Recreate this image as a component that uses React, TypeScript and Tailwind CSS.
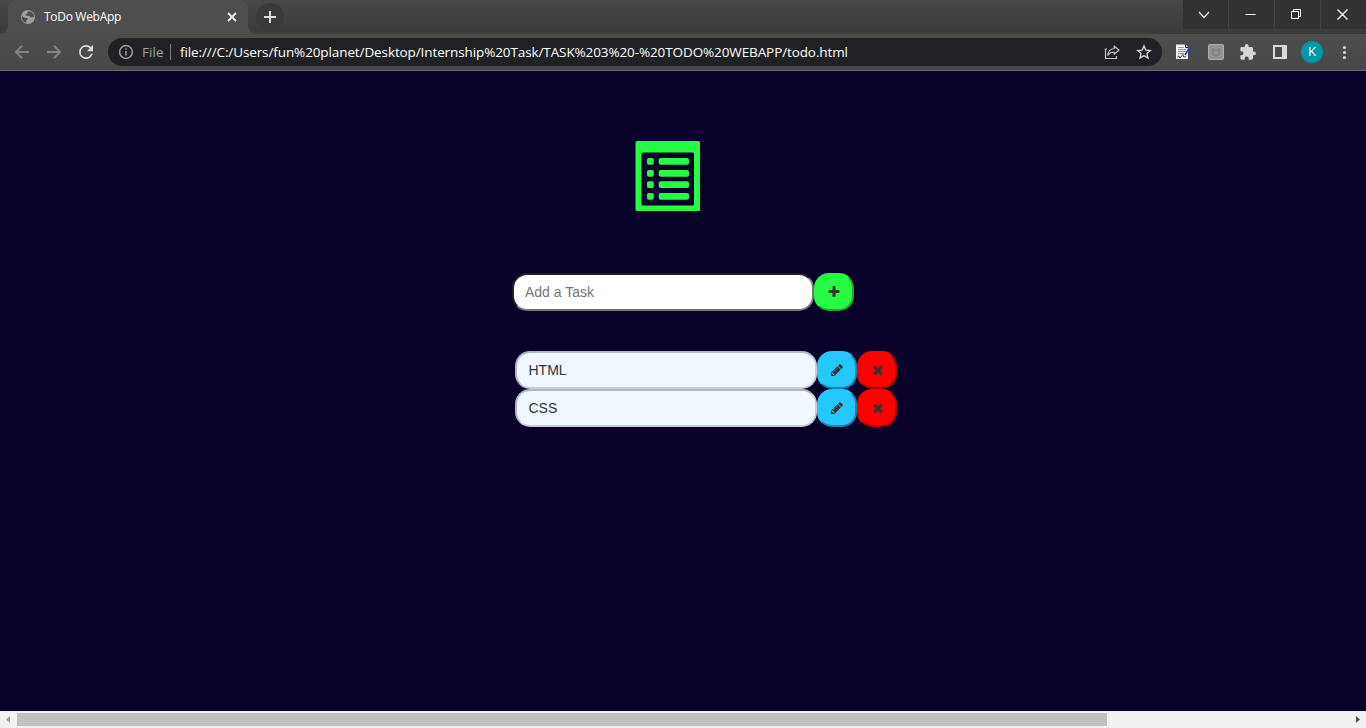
import React from 'react';

const PLUS =
  'M1600 736v192q0 40-28 68t-68 28h-416v416q0 40-28 68t-68 28h-192q-40 0-68-28t-28-68v-416h-416q-40 0-68-28t-28-68v-192q0-40 28-68t68-28h416v-416q0-40 28-68t68-28h192q40 0 68 28t28 68v416h416q40 0 68 28t28 68z';
const TIMES =
  'M1490 1322q0 40-28 68l-136 136q-28 28-68 28t-68-28l-294-294-294 294q-28 28-68 28t-68-28l-136-136q-28-28-28-68t28-68l294-294-294-294q-28-28-28-68t28-68l136-136q28-28 68-28t68 28l294 294 294-294q28-28 68-28t68 28l136 136q28 28 28 68t-28 68l-294 294 294 294q28 28 28 68z';
const PENCIL =
  'M491 1536l91-91-235-235-91 91v107h128v128h107zm523-928q0-22-22-22-10 0-17 7l-542 542q-7 7-7 17 0 22 22 22 10 0 17-7l542-542q7-7 7-17zm-54-192l416 416-832 832h-416v-416zm683 96q0 53-37 90l-166 166-416-416 166-165q36-38 90-38 53 0 91 38l235 234q37 39 37 91z';

function Glyph({ d }: { d: string }) {
  return (
    <svg className="size-3.5" viewBox="0 0 1792 1792" fill="#333">
      <path d={d} />
    </svg>
  );
}

function TabStrip() {
  return (
    <div className="flex h-[34px] bg-linear-to-b from-[#484848] to-[#3a3a3a]">
      <div className="flex w-2 items-end bg-[#4d4d4d]">
        <div className="h-full w-2 rounded-br-lg bg-linear-to-b from-[#484848] to-[#3a3a3a]" />
      </div>
      <div className="flex h-[34px] w-60 items-center rounded-t-lg bg-[#4e4e4e] pl-3">
        <svg className="size-4" viewBox="0 0 16 16">
          <circle cx="8" cy="8" r="7" fill="#9aa0a6" />
          <path
            d="M9 2.2 7.5 3v1.6L5.8 5.4v1.4h3.4l1.2 1.5H13l1.2-.8A6 6 0 0 0 9 2.2ZM2 7.2l3.5 1.9h2v1.7l-1.3.8v2.1A6 6 0 0 1 2 7.2Z"
            fill="#4e4e4e"
          />
        </svg>
        <span className="ml-2 w-[180px] text-xs tracking-[-0.3px] whitespace-nowrap text-white">ToDo WebApp</span>
        <svg className="size-4" viewBox="0 0 16 16" fill="none" stroke="#f1f1f1" strokeWidth="1.8">
          <path d="m4 4 8 8m0-8-8 8" />
        </svg>
      </div>
      <div className="flex w-2 bg-[#4d4d4d]">
        <div className="h-full w-2 rounded-bl-lg bg-linear-to-b from-[#484848] to-[#3a3a3a]" />
      </div>
      <div className="mt-[3px] flex size-7 items-center justify-center rounded-full bg-[#3a3a3a]">
        <svg className="size-3.5" viewBox="0 0 14 14" stroke="#dedede" strokeWidth="2">
          <path d="M7 1v12M1 7h12" />
        </svg>
      </div>
      <div className="ml-auto flex h-[29px] gap-px bg-[#434343]">
        <div className="flex w-[45px] items-center justify-center bg-[#323232] pr-[3px]">
          <svg className="size-3" viewBox="0 0 12 12" fill="none" stroke="#eee" strokeWidth="1.2">
            <path d="m1 3 5 5.500 5-5.500" />
          </svg>
        </div>
        <div className="flex w-[45px] items-center justify-center bg-[#323232] pr-0.5">
          <svg className="h-[11px] w-[11px]" viewBox="0 0 11 11" stroke="#fff">
            <path d="M.5 5.5h10" />
          </svg>
        </div>
        <div className="flex w-[45px] items-center justify-center bg-[#323232] pr-0.5">
          <svg className="h-[11px] w-[11px]" viewBox="0 0 11 11" fill="none" stroke="#fff">
            <path d="M.5 2.5h7v7h-7ZM2.5 2.5v-2h7v7h-2" />
          </svg>
        </div>
        <div className="flex w-[45px] items-center justify-center bg-[#323232] pr-0.5">
          <svg className="h-[11px] w-[11px]" viewBox="0 0 11 11" stroke="#fff" strokeWidth="1.2">
            <path d="m.5.5 10 10m0-10-10 10" />
          </svg>
        </div>
      </div>
    </div>
  );
}

function Toolbar() {
  return (
    <div className="flex h-[37px] items-center border-b border-[#6b6b6b] bg-linear-to-b from-[#4d4d4d] to-[#484848] pl-3">
      <svg className="size-5" viewBox="0 0 20 20" fill="none" stroke="#858585" strokeWidth="1.8">
        <path d="M17 10H4m6-6.2L3.8 10l6.2 6.2" />
      </svg>
      <svg className="ml-3 size-5" viewBox="0 0 20 20" fill="none" stroke="#858585" strokeWidth="1.8">
        <path d="M3 10h13M10 3.8l6.2 6.2-6.2 6.2" />
      </svg>
      <svg className="ml-2.5 size-6" viewBox="0 0 24 24" fill="#e0e0e0">
        <g transform="translate(1.6 1.6) scale(.87)">
          <path d="M17.65 6.35A7.96 7.96 0 0 0 12 4a8 8 0 1 0 7.73 10h-2.08A6 6 0 1 1 12 6c1.66 0 3.14.69 4.22 1.78L13 11h7V4l-2.35 2.35z" />
        </g>
      </svg>
      <div className="ml-[10px] flex h-7 w-[1054px] items-center rounded-full bg-[#202124] pr-2.5 pl-2.5">
        <svg className="size-4" viewBox="0 0 16 16" fill="none" stroke="#9aa0a6" strokeWidth="1.5">
          <circle cx="8" cy="8" r="6.4" />
          <path d="M8 7v4.6M8 4.3v1.5" />
        </svg>
        <span className="ml-2 w-7 text-[13.5px] tracking-[0.1px] text-[#9aa0a6]">File</span>
        <span className="h-4 w-px bg-[#77797d]" />
        <span className="ml-[9px] text-[13.5px] tracking-[-0.106px] whitespace-nowrap text-white">
          file:///C:/Users/fun%20planet/Desktop/Internship%20Task/TASK%203%20-%20TODO%20WEBAPP/todo.html
        </span>
        <svg className="ml-auto size-4" viewBox="0 0 16 16" fill="none" stroke="#c4c5c7" strokeWidth="1.2">
          <path d="M3 5H1.500v9.500h11V12" />
          <path d="M10.200 2 15 6.200l-4.800 4V8C7.200 8 5.500 9 3.700 11.200 4.200 7.500 6 4.900 10.200 4.500Z" strokeLinejoin="round" />
        </svg>
        <svg className="ml-4 size-4" viewBox="0 0 16 16" fill="none" stroke="#d0d1d3" strokeWidth="1.4">
          <path d="m8 1.9 1.8 4.200 4.600.4-3.500 3 1.100 4.500L8 11.600 4 14l1.100-4.500-3.500-3 4.600-.4Z" />
        </svg>
      </div>
      <div className="ml-3 flex items-center">
        <svg className="size-[18px]" viewBox="0 0 18 18">
          <path d="M2 1.500h9.500l2.500 2.500v12H2z" fill="#f5f5f5" />
          <path d="M11.500 1.500v3H14" fill="none" stroke="#222" />
          <path d="M4 4.500h6M4 6.500h8M4 8.500h8M4 10.500h6" stroke="#999" />
          <path d="M3.500 14q2-2.500 2 0t2-1 2 .8h2.500" stroke="#444" fill="none" />
          <path d="m11 12 5.500-8.500" stroke="#2445bd" strokeWidth="1.800" />
        </svg>
        <svg className="ml-4 size-4" viewBox="0 0 16 16">
          <rect x=".5" y=".5" width="15" height="15" rx="1" fill="#929497" stroke="#aaadb0" />
          <path d="M4.800 5v5.500L8 12l3.200-1.500V5L8 7Z" fill="none" stroke="#7b7e80" strokeWidth="1.300" />
        </svg>
        <svg className="ml-4 size-4" viewBox="1.500 1 21.500 21.500" fill="#d6d6d6">
          <path d="M20.500 11H19V7a2 2 0 0 0-2-2h-4V3.500a2.500 2.500 0 0 0-5 0V5H4a2 2 0 0 0-2 2v3.800h1.500a2.700 2.700 0 0 1 0 5.400H2V20c0 1.100.9 2 2 2h3.800v-1.500a2.700 2.700 0 0 1 5.400 0V22H17a2 2 0 0 0 2-2v-4h1.500a2.500 2.500 0 0 0 0-5z" />
        </svg>
        <svg className="ml-[17px] size-3.5" viewBox="0 0 14 14">
          <path d="M0 0h14v14H0ZM2 2v10h7V2Z" fill="#dadada" fillRule="evenodd" />
        </svg>
        <span className="ml-[14px] flex size-[22px] items-center justify-center rounded-full bg-[#0097a7] text-[13px] text-white">
          K
        </span>
        <svg className="ml-3.5 size-4" viewBox="0 0 16 16" fill="#d6d6d6">
          <circle cx="7.500" cy="3.500" r="1.600" />
          <circle cx="7.500" cy="8.500" r="1.600" />
          <circle cx="7.500" cy="13.500" r="1.600" />
        </svg>
      </div>
    </div>
  );
}

function TaskRow({ name }: { name: string }) {
  return (
    <div className="flex h-[38px]">
      <div className="flex w-[302px] items-center rounded-[15px] border-2 border-t-[#b3b6bf] border-r-[#c8ccd3] border-b-[#c8ccd3] border-l-[#b3b6bf] bg-[#f0f8ff] pl-[11.500px] text-sm text-[#333]">
        {name}
      </div>
      <button className="flex w-10 items-center justify-center rounded-[15px] border-2 border-t-[#25c8fc] border-r-[#1788ab] border-b-[#1788ab] border-l-[#25c8fc] bg-[#25c8fc]">
        <Glyph d={PENCIL} />
      </button>
      <button className="flex w-10 items-center justify-center rounded-[15px] border-2 border-t-[#ff0000] border-r-[#ad0000] border-b-[#ad0000] border-l-[#ff0000] bg-[#ff0000] pl-0.5">
        <Glyph d={TIMES} />
      </button>
    </div>
  );
}

export default function App() {
  return (
    <div className="flex h-[728px] w-[1366px] flex-col overflow-hidden bg-[#090129]">
      <header className="font-['Open_Sans','Noto_Sans',sans-serif]">
        <TabStrip />
        <Toolbar />
      </header>
      <main className="h-[640px] font-['Liberation_Sans',sans-serif]">
        <svg className="mt-[70px] ml-[635px] h-[70px] w-[66px]" viewBox="0 0 66 70" fill="#26fc42">
          <path
            d="M2 0h61.500a1.500 1.500 0 0 1 1.500 1.500v67a1.500 1.500 0 0 1-1.500 1.500H2a1.500 1.500 0 0 1-1.500-1.500v-67A1.500 1.500 0 0 1 2 0ZM8 11.500a1.500 1.500 0 0 0-1.500 1.500v50A1.500 1.500 0 0 0 8 64.500h49.500A1.500 1.500 0 0 0 59 63V13a1.500 1.500 0 0 0-1.500-1.500Z"
            fillRule="evenodd"
          />
          {[17, 29, 40.300, 52].map((y) => (
            <g key={y}>
              <rect x="12" y={y} width="6.800" height="6.800" rx="1.800" />
              <rect x="23.700" y={y} width="30.300" height="6.800" rx="2" />
            </g>
          ))}
        </svg>
        <div className="mt-[62px] ml-[512px] flex h-[38px]">
          <input
            className="w-[302px] rounded-[15px] border-2 border-t-[#212121] border-r-[#767676] border-b-[#767676] border-l-[#212121] bg-white pl-[11px] text-sm placeholder:text-[#757575]"
            placeholder="Add a Task"
          />
          <button className="flex w-10 items-center justify-center rounded-[15px] border-2 border-t-[#26fc42] border-r-[#1aab2d] border-b-[#1aab2d] border-l-[#26fc42] bg-[#26fc42]">
            <Glyph d={PLUS} />
          </button>
        </div>
        <div className="mt-10 ml-[515px]">
          <TaskRow name="HTML" />
          <TaskRow name="CSS" />
        </div>
      </main>
      <div className="flex h-[17px] items-center bg-[#f1f1f1]">
        <svg className="h-[17px] w-[17px]" viewBox="0 0 17 17" fill="#a3a3a3">
          <path d="M10 5v7L6 8.500Z" />
        </svg>
        <div className="h-[13px] w-[1090px] bg-[#c1c1c1]" />
        <svg className="ml-auto h-[17px] w-[17px]" viewBox="0 0 17 17" fill="#505050">
          <path d="M7 5v7l4-3.500Z" />
        </svg>
      </div>
    </div>
  );
}
